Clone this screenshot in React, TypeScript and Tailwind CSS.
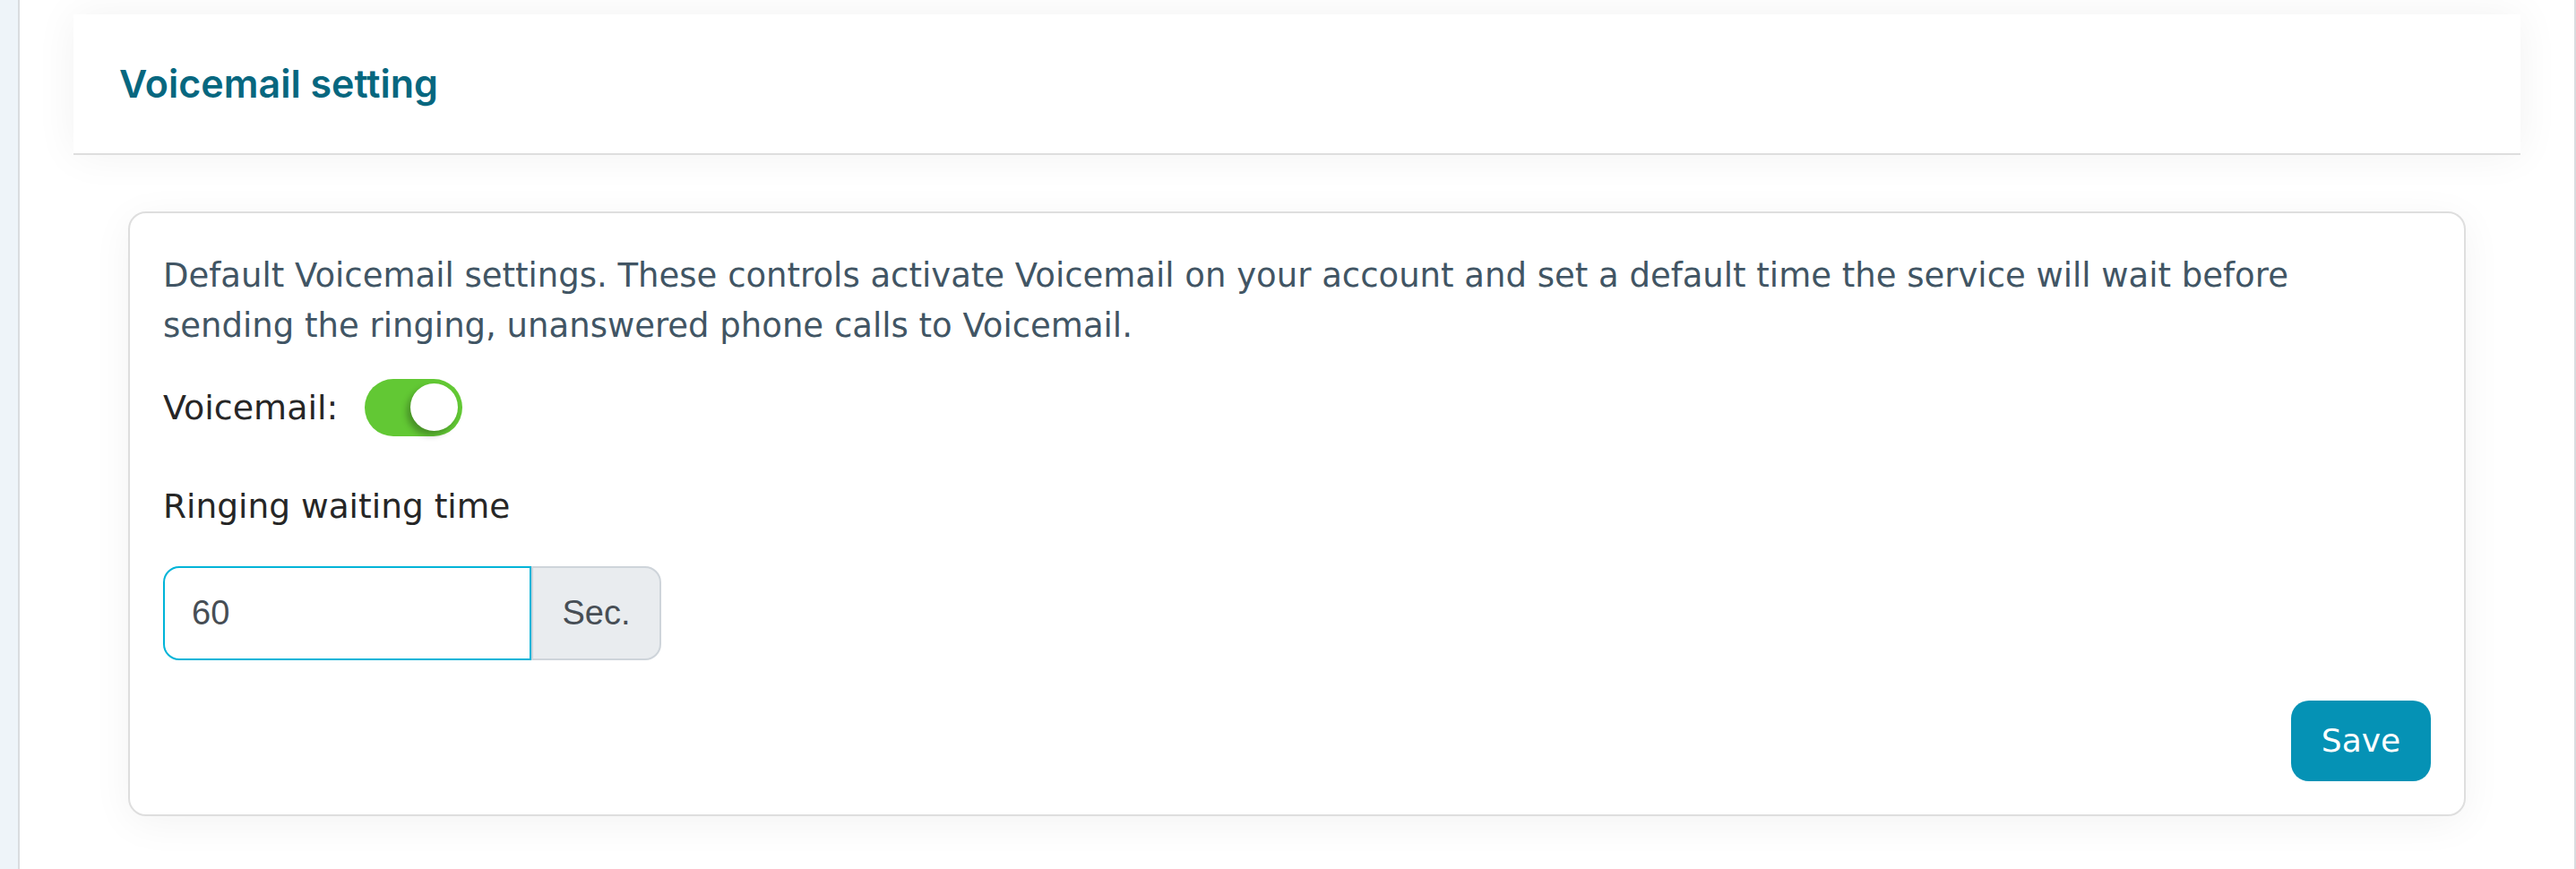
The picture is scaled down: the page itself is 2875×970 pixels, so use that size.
import { useState } from "react";

const bodyFont = { fontFamily: '"DejaVu Sans", "Noto Sans", sans-serif' };

function Toggle({ on, onChange }: { on: boolean; onChange: (v: boolean) => void }) {
  return (
    <button
      type="button"
      onClick={() => onChange(!on)}
      className={`relative h-[64px] w-[109px] rounded-full transition-colors ${
        on ? "bg-[#62c834]" : "bg-[#cfd4d8]"
      }`}
    >
      <span
        className={`absolute top-[5px] h-[53px] w-[53px] rounded-full bg-white shadow-[-4px_5px_7px_rgba(0,0,0,0.28)] transition-all ${
          on ? "left-[51px]" : "left-[5px]"
        }`}
      />
    </button>
  );
}

export default function App() {
  const [enabled, setEnabled] = useState(true);
  const [seconds, setSeconds] = useState("60");

  return (
    <div className="flex min-h-screen w-full bg-white">
      {/* left rail */}
      <div className="w-[22px] shrink-0 border-r-2 border-[#d9dcdf] bg-[#eef4f9]" />

      <main className="flex-1 border-r-2 border-[#d9dcdf] px-[60px] pt-[16px] pb-[40px]">
        {/* page header */}
        <div className="flex h-[157px] items-center border-b-2 border-[#dedede] bg-white pl-[51px] shadow-[0_0_45px_rgba(0,0,0,0.055)]">
          <h1
            className="text-[43px] font-semibold text-[#07677f]"
            style={{ fontFamily: 'Inter, "Noto Sans", sans-serif' }}
          >
            Voicemail setting
          </h1>
        </div>

        <div className="px-[61px] pt-[63px]">
          <div
            className="rounded-[20px] border-2 border-[#dedede] bg-white p-[37px] shadow-[0_8px_45px_rgba(0,0,0,0.05)]"
            style={bodyFont}
          >
            <p className="mt-[5px] max-w-[2440px] text-[37px] leading-[56px] text-[#415564]">
              Default Voicemail settings. These controls activate Voicemail on your account and set a default time
              the service will wait before sending the ringing, unanswered phone calls to Voicemail.
            </p>

            <div className="mt-[31px] flex items-center gap-[30px]">
              <span className="text-[38px] leading-[56px] text-[#262626]">Voicemail:</span>
              <Toggle on={enabled} onChange={setEnabled} />
            </div>

            <label className="mt-[50px] block text-[37.5px] leading-[56px] text-[#262626]">
              Ringing waiting time
            </label>

            <div className="mt-[39px] flex h-[105px]">
              <input
                value={seconds}
                onChange={(e) => setSeconds(e.target.value)}
                className="h-full w-[411px] rounded-l-[18px] border-2 border-[#00b4d8] bg-white pl-[30px] text-[38px] text-[#474e55] outline-none"
                style={{ fontFamily: '"Liberation Sans", Arial, sans-serif' }}
              />
              <span
                className="flex h-full w-[145px] items-center justify-center rounded-r-[18px] border-2 border-[#ced4da] bg-[#e9ecef] text-[38px] text-[#474e55]"
                style={{ fontFamily: '"Liberation Sans", Arial, sans-serif' }}
              >
                Sec.
              </span>
            </div>

            <div className="mt-[45px] flex justify-end">
              <button
                type="button"
                className="h-[90px] w-[156px] rounded-[20px] bg-[#0592b5] text-[36px] text-white"
              >
                Save
              </button>
            </div>
          </div>
        </div>
      </main>
    </div>
  );
}
